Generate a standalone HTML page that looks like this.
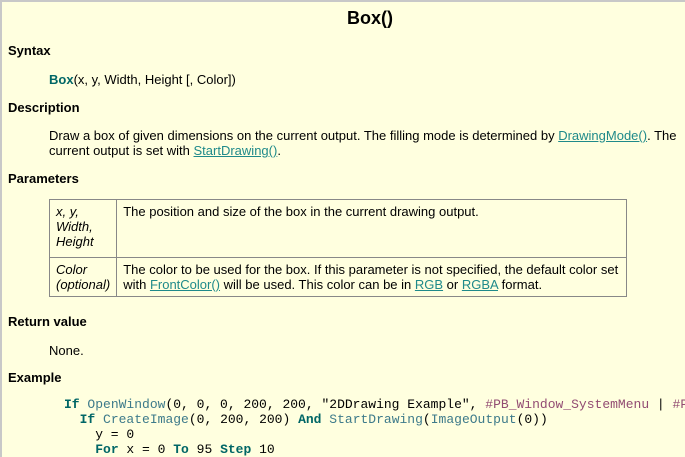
<!DOCTYPE html>
<html><head><meta charset="utf-8"><style>
body{margin:0;width:685px;height:457px;overflow:hidden;background:#FFFFDF;font-family:"Liberation Sans",Arial,sans-serif;font-size:13px;color:#000;position:relative}
.bt{position:absolute;left:0;top:0;width:685px;height:2px;background:#c8c8c8}
.bl{position:absolute;left:0;top:0;width:2px;height:457px;background:#c8c8c8}
.a{position:absolute;white-space:nowrap}
h{font-weight:bold;font-size:13px}
a{color:#1F8A8A;text-decoration:underline}
.k{color:#006666;font-weight:bold}
.f{color:#3D7A8A}
.c{color:#924B72}
pre{margin:0;font-family:"Liberation Mono","Courier New",monospace;font-size:13px;line-height:15px;white-space:pre !important}
table{position:absolute;left:49px;top:199px;width:578px;border-collapse:collapse;font-size:13px}
td{border:1px solid #888;vertical-align:top;padding:4px 6px;line-height:15px}
</style></head><body>
<div class="bt"></div><div class="bl"></div>
<div class="a" style="left:347px;top:8px;font-size:18px;font-weight:bold">Box()</div>
<div class="a" style="left:8px;top:43px"><h>Syntax</h></div>
<div class="a" style="left:49px;top:72px"><b style="color:#006666">Box</b>(x, y, Width, Height [, Color])</div>
<div class="a" style="left:8px;top:100px"><h>Description</h></div>
<div class="a" style="left:49px;top:128px;line-height:15px">Draw a box of given dimensions on the current output. The filling mode is determined by <a>DrawingMode()</a>. The<br>current output is set with <a>StartDrawing()</a>.</div>
<div class="a" style="left:8px;top:171px"><h>Parameters</h></div>
<table>
<tr style="height:58px"><td style="width:54px;font-style:italic">x, y,<br>Width,<br>Height</td><td>The position and size of the box in the current drawing output.</td></tr>
<tr><td style="font-style:italic">Color<br>(optional)</td><td>The color to be used for the box. If this parameter is not specified, the default color set<br>with <a>FrontColor()</a> will be used. This color can be in <a>RGB</a> or <a>RGBA</a> format.</td></tr>
</table>
<div class="a" style="left:8px;top:314px"><h>Return value</h></div>
<div class="a" style="left:49px;top:343px">None.</div>
<div class="a" style="left:8px;top:370px"><h>Example</h></div>
<pre class="a" style="left:64px;top:397px"><span class="k">If</span> <span class="f">OpenWindow</span>(0, 0, 0, 200, 200, "2DDrawing Example", <span class="c">#PB_Window_SystemMenu</span> | <span class="c">#PB</span>
  <span class="k">If</span> <span class="f">CreateImage</span>(0, 200, 200) <span class="k">And</span> <span class="f">StartDrawing</span>(<span class="f">ImageOutput</span>(0))
    y = 0
    <span class="k">For</span> x = 0 <span class="k">To</span> 95 <span class="k">Step</span> 10</pre>
</body></html>
